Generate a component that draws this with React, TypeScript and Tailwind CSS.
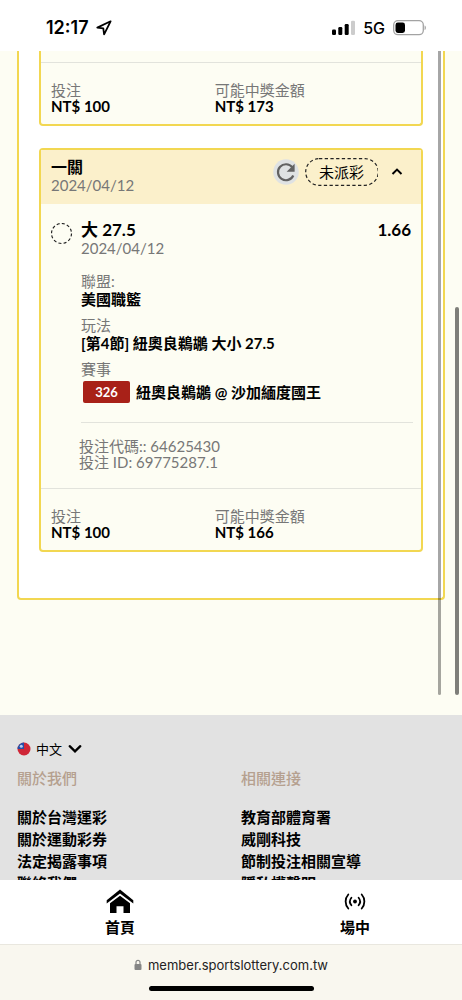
import React from "react";

const league = [
  { label: "聯盟:", value: "美國職籃" },
  { label: "玩法", value: "[第4節] 紐奧良鵜鶘 大小 27.5" },
];

const footerColumns = [
  {
    title: "關於我們",
    links: ["關於台灣運彩", "關於運動彩券", "法定揭露事項", "聯絡我們"],
  },
  {
    title: "相關連接",
    links: ["教育部體育署", "威剛科技", "節制投注相關宣導", "隱私權聲明"],
  },
];

function StatusBar() {
  return (
    <header className="flex h-[51px] shrink-0 items-center justify-between bg-white pt-1 pr-[35px] pl-[46px] font-['Inter',sans-serif] text-black">
      <div className="flex items-center gap-[7px]">
        <span className="text-[18px] leading-6 font-semibold">12:17</span>
        <svg width="16" height="16" viewBox="0 0 16 16" fill="none" aria-hidden="true">
          <path
            d="M14.6 1.3 1.3 7.6l6 .8.8 6z"
            stroke="#000"
            strokeWidth="1.8"
            strokeLinejoin="round"
          />
        </svg>
      </div>
      <div className="flex items-center gap-[8px]">
        <svg width="23" height="16" viewBox="0 0 23 16" aria-hidden="true">
          <rect x="0" y="9.5" width="4" height="5.500" rx="1.2" />
          <rect x="6.3" y="7" width="4" height="8" rx="1.2" />
          <rect x="12.700" y="4" width="4" height="11" rx="1.2" />
          <rect x="19" y="0.7" width="4" height="14.3" rx="1.2" fill="#ccc" />
        </svg>
        <span className="text-[16px] leading-6 font-medium">5G</span>
        <svg width="34" height="16" viewBox="0 0 34 16" aria-hidden="true">
          <rect x="0.7" y="0.7" width="29.6" height="14" rx="4.2" fill="none" stroke="#a3a3a3" strokeWidth="1.3" />
          <rect x="2.5" y="2.5" width="9.5" height="10.4" rx="2.4" />
          <path d="M31.6 5.4c1.6.5 1.6 4.2 0 4.7z" fill="#999" />
        </svg>
      </div>
    </header>
  );
}

function StakeRow({ stake, payout }: { stake: string; payout: string }) {
  return (
    <dl className="grid grid-cols-[5fr_6fr] border-t border-[#e2e3dc] px-[10px] pt-[19px] pb-[10px] text-[15px] leading-4">
      <div>
        <dt className="text-[#777]">投注</dt>
        <dd className="font-bold">{stake}</dd>
      </div>
      <div>
        <dt className="text-[#777]">可能中獎金額</dt>
        <dd className="font-bold">{payout}</dd>
      </div>
    </dl>
  );
}

function BetCard() {
  return (
    <article className="mt-[22px] rounded-[4px] border-2 border-[#f2d751] bg-[#fdfdf3]">
      <div className="flex items-start justify-between bg-[#fbf0cb] pt-2 pr-[18px] pb-[10px] pl-[10px]">
        <div className="leading-[18px]">
          <h2 className="text-[16px] leading-[18px] font-bold">一關</h2>
          <p className="text-[15px] leading-[18px] text-[#777]">2024/04/12</p>
        </div>
        <div className="flex items-center">
          <button type="button" aria-label="重新整理">
            <svg width="26" height="26" viewBox="0 0 26 26" fill="none" aria-hidden="true">
              <circle cx="13" cy="13" r="12.8" fill="#dfe2e3" />
              <path d="M19.300 8.300A8 8 0 1 0 20.300 16.500" stroke="#626262" strokeWidth="2.200" />
              <path d="M21.600 4.800v8h-8z" fill="#626262" />
            </svg>
          </button>
          <span className="relative ml-[6px] px-[14px] text-[15px] leading-7">
            <svg className="absolute inset-0 h-full w-full" fill="none" aria-hidden="true">
              <rect x="0.700" y="0.700" width="72.600" height="26.600" rx="13.300" stroke="#222" strokeWidth="1.200" strokeDasharray="3.300 2.400" />
            </svg>
            未派彩
          </span>
          <button type="button" aria-label="收合" className="ml-[13px]">
            <svg width="12" height="12" viewBox="0 0 12 12" fill="none" aria-hidden="true">
              <path d="m1.500 8 4.500-4.400L10.500 8" stroke="#000" strokeWidth="2" />
            </svg>
          </button>
        </div>
      </div>

      <div className="flex gap-2 px-[10px] pt-[17px]">
        <svg width="22" height="22" viewBox="0 0 22 22" fill="none" className="mt-[2px] shrink-0" aria-hidden="true">
          <circle cx="10.500" cy="10.500" r="10" stroke="#222" strokeWidth="1.200" strokeDasharray="3 2.236" />
        </svg>
        <div className="min-w-0 flex-1">
          <div className="flex justify-between text-[17px] leading-[18px] font-bold">
            <h3>大 27.5</h3>
            <span>1.66</span>
          </div>
          <p className="text-[15px] leading-[18px] text-[#777]">2024/04/12</p>
          <dl className="mt-[15px] flex flex-col gap-2 text-[15px] leading-[18px]">
            {league.map((item) => (
              <div key={item.label}>
                <dt className="text-[#777]">{item.label}</dt>
                <dd className="font-bold">{item.value}</dd>
              </div>
            ))}
            <div>
              <dt className="text-[#777]">賽事</dt>
              <dd className="mt-[3px] flex items-center gap-[6px] pl-[2px] font-bold">
                <span className="w-[47px] rounded-[2px] bg-[#a82118] text-center text-[13px] leading-[22px] text-white">
                  326
                </span>
                紐奧良鵜鶘 @ 沙加緬度國王
              </dd>
            </div>
          </dl>
        </div>
      </div>

      <div className="mt-[19px] mr-2 ml-[38px]">
        <hr className="ml-[2px] border-[#e2e3dc]" />
        <p className="pt-[15px] pb-[18px] text-[15px] leading-4 text-[#777]">
          投注代碼:: 64625430
          <br />
          投注 ID: 69775287.1
        </p>
      </div>
      <StakeRow stake="NT$ 100" payout="NT$ 166" />
    </article>
  );
}

function SiteFooter() {
  return (
    <footer className="mt-[115px] bg-[#e2e2e2] px-[17px] pt-6 pb-6">
      <div className="flex h-5 items-center">
        <svg width="14" height="14" viewBox="0 0 14 14" aria-hidden="true">
          <circle cx="7" cy="7" r="6.500" fill="#cf2637" />
          <path d="M7 .5V7H.5A6.500 6.500 0 0 1 7 .5z" fill="#244fa8" />
          <circle cx="4.300" cy="4.300" r="1.500" fill="#b9cbee" />
        </svg>
        <select aria-label="語言" className="ml-[5px] appearance-none bg-transparent text-[13px] leading-5">
          <option>中文</option>
        </select>
        <svg width="14" height="10" viewBox="0 0 14 10" fill="none" className="ml-[5px]" aria-hidden="true">
          <path d="m1.700 2.200 5.300 5.100 5.300-5.100" stroke="#000" strokeWidth="2.300" strokeLinecap="round" />
        </svg>
      </div>
      <div className="mt-2 grid grid-cols-2 gap-5">
        {footerColumns.map((column) => (
          <nav key={column.title} aria-label={column.title}>
            <h4 className="text-[15px] leading-[22px] font-medium text-[#b5a08f]">{column.title}</h4>
            <ul className="mt-[17px] text-[15px] leading-[22px] font-bold">
              {column.links.map((link) => (
                <li key={link}>
                  <a href="#">{link}</a>
                </li>
              ))}
            </ul>
          </nav>
        ))}
      </div>
    </footer>
  );
}

function TabBar() {
  return (
    <nav className="flex h-16 shrink-0 items-start justify-between bg-white pt-[9px] pr-[92px] pl-[105px] text-[15px] leading-[22px] font-bold">
      <a href="#" className="flex flex-col items-center gap-[2px]">
        <svg width="28" height="25" viewBox="0 0 28 25" aria-hidden="true">
          <path d="M14 .6 27.300 11.200v3.200L14 4.400.7 14.400v-3.200z" />
          <path d="M14 6.700 24 14.200V24h-6.500v-6.700h-7V24H4v-9.800z" />
        </svg>
        首頁
      </a>
      <a href="#" className="flex flex-col items-center gap-[2px]">
        <svg width="22" height="25" viewBox="0 0 22 25" fill="none" stroke="#000" strokeWidth="1.800" strokeLinecap="round" aria-hidden="true">
          <circle cx="11" cy="12.500" r="1.900" fill="#000" stroke="none" />
          <path d="M4.300 5.500a10.500 10.500 0 0 0 0 14M17.700 5.500a10.500 10.500 0 0 1 0 14" />
          <path d="M7.400 8.700a6 6 0 0 0 0 7.600M14.600 8.700a6 6 0 0 1 0 7.600" />
        </svg>
        場中
      </a>
    </nav>
  );
}

function AddressBar() {
  return (
    <div className="flex h-14 shrink-0 flex-col items-center justify-between border-t border-[#e9e7df] bg-[#f9f7ef] pt-[10px] pb-[9px]">
      <div className="flex items-center gap-[6px] font-['Inter',sans-serif] text-[13px] leading-5 text-[#222]">
        <svg width="8" height="12" viewBox="0 0 8 12" aria-hidden="true">
          <path d="M2 5.500V3.300a2 2 0 0 1 4 0v2.200" fill="none" stroke="#858585" strokeWidth="1.200" />
          <rect x="0.500" y="5" width="7" height="6" rx="1" fill="#858585" />
        </svg>
        member.sportslottery.com.tw
      </div>
      <div className="h-[5px] w-[165px] rounded-full bg-black" />
    </div>
  );
}

export default function App() {
  return (
    <div className="flex h-screen flex-col overflow-hidden bg-[#fdfdf3] font-['Lato','Noto_Sans_CJK_TC',sans-serif] text-black">
      <StatusBar />
      <main className="relative min-h-0 flex-1 overflow-hidden">
        <section className="mx-[17px] rounded-b-[4px] border-x-2 border-b-2 border-[#f2d751] bg-white px-5 pb-[46px]">
          <article className="rounded-b-[4px] border-x-2 border-b-2 border-[#f2d751] bg-[#fdfdf3] pt-[11px]">
            <StakeRow stake="NT$ 100" payout="NT$ 173" />
          </article>
          <BetCard />
        </section>
        <SiteFooter />
        <div className="absolute top-0 right-[21px] h-[644px] w-[3px] rounded-b-full bg-black/35" />
        <div className="absolute top-[256px] right-[3px] h-[388px] w-[4px] rounded-full bg-black/50" />
      </main>
      <TabBar />
      <AddressBar />
    </div>
  );
}
